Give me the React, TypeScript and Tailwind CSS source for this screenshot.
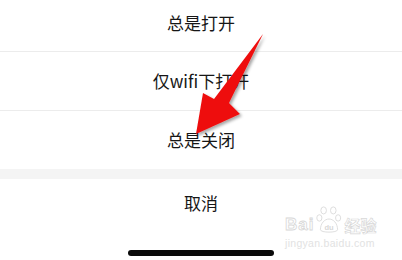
import React from "react";

const font = { fontFamily: '"Noto Sans CJK SC", "Noto Sans", sans-serif' };

function Row({ label, className }: { label: string; className: string }) {
  return (
    <div className={`flex items-center justify-center text-[17px] text-[#161616] ${className}`}>
      {label}
    </div>
  );
}

export default function App() {
  return (
    <div className="relative w-[402px] h-[260px] overflow-hidden bg-white" style={font}>
      <div className="flex flex-col">
        <Row label="总是打开" className="h-[51px] pb-[6px]" />
        <div className="h-px bg-[#ececec]" />
        <Row label="仅wifi下打开" className="h-[58px]" />
        <div className="h-px bg-[#ececec]" />
        <Row label="总是关闭" className="h-[58px]" />
        <div className="h-[10px] bg-[#f4f4f4]" />
        <Row label="取消" className="h-[48px]" />
        <div className="flex justify-center pt-[23px]">
          <div className="w-[146px] h-[6px] rounded-full bg-[#0a0a0a]" />
        </div>
      </div>

      {/* red arrow annotation */}
      <svg
        className="absolute left-0 top-0 pointer-events-none"
        width="402"
        height="260"
        viewBox="0 0 402 260"
      >
        <defs>
          <filter id="sh" x="-20%" y="-20%" width="140%" height="140%">
            <feDropShadow dx="2" dy="2" stdDeviation="1.5" floodColor="#000" floodOpacity="0.35" />
          </filter>
        </defs>
        <polygon
          points="263,34 229,103 240,114 196,134 203,93 214,99"
          fill="#ee1111"
          filter="url(#sh)"
        />
      </svg>

      {/* watermark */}
      <div className="absolute left-[285px] top-[204px] flex flex-col pointer-events-none">
        <div className="flex items-end gap-[2px]">
          <span
            className="text-[17px] leading-none font-bold text-white tracking-[1px] mb-[1px]"
            style={{ fontFamily: '"Liberation Sans", Arial, sans-serif', WebkitTextStroke: "0.8px #d8d8d8" }}
          >
            Bai
          </span>
          <svg width="26" height="30" viewBox="0 0 24 28">
            <g fill="#fff" stroke="#d8d8d8" strokeWidth="0.8">
              <ellipse cx="7" cy="6" rx="2.6" ry="3.3" />
              <ellipse cx="16" cy="6" rx="2.6" ry="3.3" />
              <ellipse cx="3" cy="13" rx="2.4" ry="3" />
              <ellipse cx="20.5" cy="13" rx="2.4" ry="3" />
              <path d="M4 24 C4 18 8 14 12 14 C16 14 20 18 20 24 C20 27 4 27 4 24 Z" />
            </g>
            <text x="12" y="24" textAnchor="middle" fontSize="7" fill="#d8d8d8" fontFamily="Liberation Sans, Arial, sans-serif" fontWeight="bold">du</text>
          </svg>
          <span
            className="text-[16px] leading-none font-bold text-white mb-[1px]"
            style={{ WebkitTextStroke: "0.7px #d8d8d8" }}
          >
            经验
          </span>
        </div>
        <span
          className="mt-[4px] text-[10.5px] leading-none text-[#e2e2e2] tracking-[0.3px]"
          style={{ fontFamily: '"Liberation Sans", Arial, sans-serif' }}
        >
          jingyan.baidu.com
        </span>
      </div>
    </div>
  );
}
